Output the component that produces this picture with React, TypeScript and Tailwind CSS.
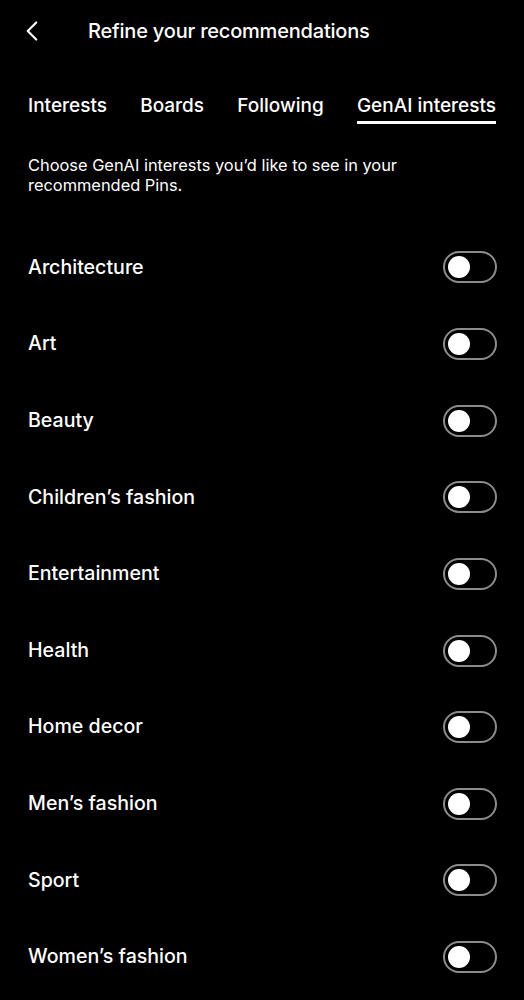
import { ChevronLeft } from 'lucide-react';

const interests = [
    'Architecture',
    'Art',
    'Beauty',
    "Children\u2019s fashion",
    'Entertainment',
    'Health',
    'Home decor',
    "Men\u2019s fashion",
    'Sport',
    "Women\u2019s fashion",
];

const tabs = ['Interests', 'Boards', 'Following', 'GenAI interests'];

function Toggle() {
    return (
        <div className="w-[54px] h-[32px] rounded-full border-2 border-[#8c8c8c] flex items-center pl-[3px]">
            <div className="w-[22px] h-[22px] rounded-full bg-white" />
        </div>
    );
}

export default function App() {
    return (
        <div className="w-[524px] h-[1000px] bg-black text-white overflow-hidden" style={{ fontFamily: 'Inter, "Noto Sans", sans-serif' }}>
            <div className="h-[62px] flex items-center">
                <ChevronLeft size={34} strokeWidth={1.5} className="ml-[15px] text-white" />
                <h1 className="ml-[39px] text-[20px] font-medium tracking-[-0.2px]">Refine your recommendations</h1>
            </div>

            <div className="flex justify-between pl-[28px] pr-[28px] pt-[32px]">
                {tabs.map((tab, i) => (
                    <div key={tab} className="flex flex-col">
                        <span className="text-[19px] leading-[24px] font-medium">{tab}</span>
                        <div className={`mt-[3px] h-[3px] ${i === tabs.length - 1 ? 'bg-white' : 'bg-transparent'}`} />
                    </div>
                ))}
            </div>

            <p className="mt-[31px] px-[28px] text-[16.4px] leading-[20px] pr-[100px]">
                Choose GenAI interests you&rsquo;d like to see in your recommended Pins.
            </p>

            <div className="mt-[34px]">
                {interests.map(name => (
                    <div key={name} className="h-[76.65px] flex items-center justify-between pl-[28px] pr-[27px]">
                        <span className="text-[19.6px] font-medium">{name}</span>
                        <Toggle />
                    </div>
                ))}
            </div>
        </div>
    );
}
